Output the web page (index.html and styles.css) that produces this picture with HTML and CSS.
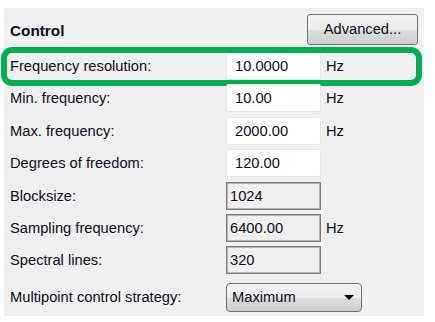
FILE: index.html
```html
<!DOCTYPE html>
<html lang="en">
<head>
  <meta charset="UTF-8"/>
  <title>Control</title>
  <link rel="stylesheet" href="styles.css">
</head>
<body>
  <div class="panel">
    <div class="header">
      <span class="title">Control</span>
      <button class="btn">Advanced...</button>
    </div>

    <div class="rows">
      <div class="row highlight">
        <span class="label">Frequency resolution:</span>
        <div class="field edit">10.0000</div>
        <span class="unit">Hz</span>
      </div>
      <div class="row">
        <span class="label">Min. frequency:</span>
        <div class="field edit">10.00</div>
        <span class="unit">Hz</span>
      </div>
      <div class="row">
        <span class="label">Max. frequency:</span>
        <div class="field edit">2000.00</div>
        <span class="unit">Hz</span>
      </div>
      <div class="row">
        <span class="label">Degrees of freedom:</span>
        <div class="field edit">120.00</div>
        <span class="unit"></span>
      </div>
      <div class="row">
        <span class="label">Blocksize:</span>
        <div class="field readonly">1024</div>
        <span class="unit"></span>
      </div>
      <div class="row">
        <span class="label">Sampling frequency:</span>
        <div class="field readonly">6400.00</div>
        <span class="unit">Hz</span>
      </div>
      <div class="row">
        <span class="label">Spectral lines:</span>
        <div class="field readonly">320</div>
        <span class="unit"></span>
      </div>
      <div class="row combo-row">
        <span class="label">Multipoint control strategy:</span>
        <div class="combo">
          <span>Maximum</span>
          <span class="arrow"></span>
        </div>
      </div>
    </div>
  </div>
</body>
</html>
```

FILE: styles.css
```css
* {
  box-sizing: border-box;
}
body {
  margin: 0;
  background: #fff;
  font-family: 'Liberation Sans', Arial, sans-serif;
  font-size: 14.7px;
  color: #0e0e18;
}

.panel {
  margin: 8px 0 0 4px;
  width: 420px;
  height: 308px;
  padding: 6px 6px 0 6px;
  background: #f0f0f0;
}

.header {
  display: flex;
  justify-content: space-between;
  align-items: center;
  height: 31px;
}

.title {
  font-weight: bold;
  font-size: 15.3px;
  padding-top: 2px;
}

.btn {
  width: 111px;
  height: 31px;
  border: 1px solid #707070;
  border-radius: 3px;
  background: linear-gradient(#f3f3f3 0%, #ebebeb 50%, #dddddd 51%, #cfcfcf 100%);
  font-family: inherit;
  font-size: 14.7px;
  color: #0e0e18;
  padding: 0 0 2px 0;
}

.rows {
  margin-top: 7px;
  display: flex;
  flex-direction: column;
  gap: 4.4px;
}

.row {
  display: grid;
  grid-template-columns: 216px 95px 1fr;
  align-items: center;
  height: 28px;
  position: relative;
}

.highlight::after {
  content: "";
  position: absolute;
  left: -9px;
  right: -4px;
  top: -5px;
  bottom: -6px;
  border: 6px solid #00b050;
  border-radius: 11px;
}

.field {
  height: 28px;
  display: flex;
  align-items: center;
}

.edit {
  background: #fff;
  border: 1px solid #e6e6e6;
  border-radius: 2px;
  padding-left: 8px;
}

.readonly {
  background: #f0f0f0;
  border: 1px solid #7d7d7d;
  box-shadow: inset 0 0 0 1px #b4b4b4;
  padding-left: 3px;
}

.unit {
  padding-left: 5px;
}

.combo-row {
  margin-top: 4.2px;
  height: 29px;
  grid-template-columns: 216px 136px;
}

.combo {
  height: 29px;
  display: flex;
  align-items: center;
  justify-content: space-between;
  padding: 0 6px 0 5px;
  border: 1px solid #707070;
  border-radius: 4px;
  background: linear-gradient(#f3f3f3 0%, #ebebeb 50%, #dddddd 51%, #cfcfcf 100%);
}

.arrow {
  width: 0;
  height: 0;
  border-left: 5px solid transparent;
  border-right: 5px solid transparent;
  border-top: 5px solid #000;
  margin-right: 1px;
}
```
